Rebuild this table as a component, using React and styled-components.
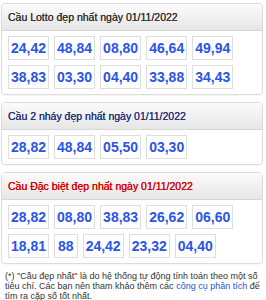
import React from "react";
import styled, { createGlobalStyle } from "styled-components";

const GlobalStyle = createGlobalStyle`
  body {
    margin: 0;
    background: #fff;
    font-family: "Liberation Sans", Arial, sans-serif;
  }
`;

const Page = styled.div`
  width: 266px;
  padding: 3px 3px 0 1px;
  box-sizing: border-box;
`;

const Card = styled.div`
  border: 1px solid #dcdcdc;
  border-radius: 4px;
  margin-bottom: 7px;
  overflow: hidden;
  box-shadow: 0 1px 1px rgba(0, 0, 0, 0.04);
`;

const Header = styled.div`
  height: 26px;
  line-height: 27px;
  padding-left: 6px;
  font-size: 10.5px;
  color: ${(p) => p.$color || "#333"};
  background: linear-gradient(#fbfbfb, #e6e6e6);
  border-bottom: 1px solid #d6d6d6;
  white-space: nowrap;
  text-shadow: 0 0 0.5px currentColor;
`;

const Grid = styled.div`
  display: flex;
  flex-wrap: wrap;
  gap: 5px 5px;
  padding: 5px 6px 5px;
`;

const Num = styled.span`
  display: inline-block;
  min-width: 35px;
  height: 22px;
  line-height: 23px;
  padding: 0 2px;
  border: 1px solid #dedede;
  text-align: center;
  font-weight: bold;
  font-size: 14px;
  color: #2b55e6;
  ${(p) => p.$short && "min-width: 0; padding: 0 3px;"}
`;

const Note = styled.p`
  margin: 6px -3px 0 0;
  padding: 0 0 0 4px;
  font-size: 9px;
  line-height: 10px;
  color: #333;
`;

const Link = styled.a`
  color: #2255cc;
  text-decoration: none;
`;

const sections = [
  { title: "Cầu Lotto đẹp nhất ngày 01/11/2022", color: "#333", nums: ["24,42", "48,84", "08,80", "46,64", "49,94", "38,83", "03,30", "04,40", "33,88", "34,43"] },
  { title: "Cầu 2 nháy đẹp nhất ngày 01/11/2022", color: "#26307a", nums: ["28,82", "48,84", "05,50", "03,30"] },
  { title: "Cầu Đặc biệt đẹp nhất ngày 01/11/2022", color: "#d40000", nums: ["28,82", "08,80", "38,83", "26,62", "06,60", "18,81", "88", "24,42", "23,32", "04,40"] },
];

export default function App() {
  return (
    <Page>
      <GlobalStyle />
      {sections.map((s) => (
        <Card key={s.title}>
          <Header $color={s.color}>{s.title}</Header>
          <Grid>
            {s.nums.map((n, i) => (
              <Num key={i} $short={n.length < 4}>{n}</Num>
            ))}
          </Grid>
        </Card>
      ))}
      <Note>
        (*) "Cầu đẹp nhất" là do hệ thống tự động tính toán theo một số tiêu chí. Các bạn nên tham khảo thêm các{" "}
        <Link href="#">công cụ phân tích</Link> để tìm ra cặp số tốt nhất.
      </Note>
    </Page>
  );
}
